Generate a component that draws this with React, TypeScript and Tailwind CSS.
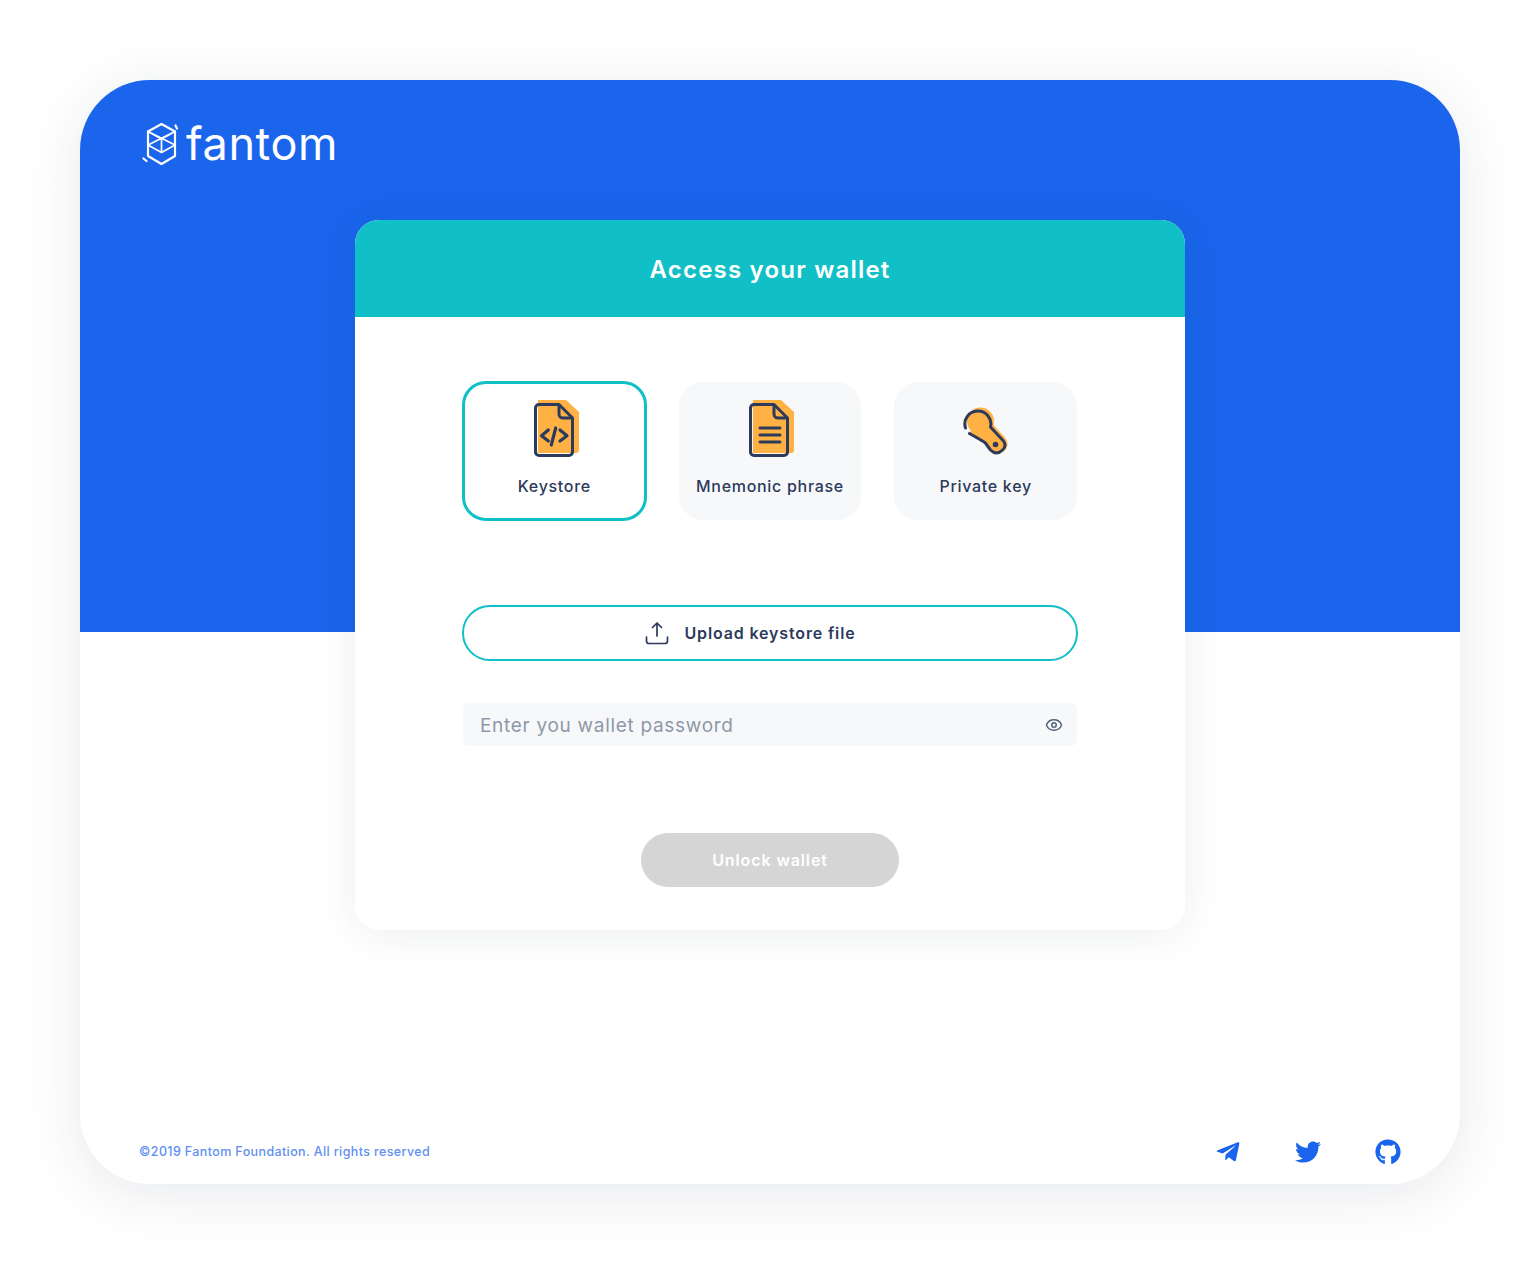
import { Eye } from 'lucide-react';
import { FaGithub, FaTelegramPlane, FaTwitter } from 'react-icons/fa';

const ink = '#2d3a5c';
const amber = '#ffb144';

function FantomLogo() {
  return (
    <svg width="40" height="44" viewBox="0 0 40 44" fill="none" stroke="#fff" strokeWidth="2.200" strokeLinejoin="round" strokeLinecap="round">
      <path d="M19.500 2 33 9.500V34L19.500 42 6 34V9.500Z" />
      <path d="M6 9.500 19.500 17 33 9.500M6 23 19.500 30.500 33 23M19.500 17V30.500M6 9.500 33 23M33 9.500 6 23" strokeWidth="1.700" />
      <path d="M33.500 3.500 35 6.500M1.500 36.500 4.500 39" />
    </svg>
  );
}

function DocShape({ children, x }: { children: React.ReactNode; x: number }) {
  return (
    <svg width="51" height="58" viewBox={`${x} 0 51 58`} fill="none">
      <path d="M4 0H32L45 12V50a3 3 0 0 1-3 3H4Z" fill={amber} />
      <path d="M25 4.500H5a3.500 3.500 0 0 0-3.500 3.500V52a3.500 3.500 0 0 0 3.500 3.500H35a3.500 3.500 0 0 0 3.500-3.500V18Z" stroke={ink} strokeWidth="3" strokeLinejoin="round" />
      <path d="M25 4.500V14a4 4 0 0 0 4 4H38.500" stroke={ink} strokeWidth="3" strokeLinejoin="round" />
      {children}
    </svg>
  );
}

function KeystoreIcon() {
  return (
    <DocShape x={-5}>
      <path d="M14.300 30 7.500 35.800 14.300 41M26 30 33 35.800 26 41M21.700 28 17.300 45" stroke={ink} strokeWidth="3.200" strokeLinecap="round" strokeLinejoin="round" />
    </DocShape>
  );
}

function MnemonicIcon() {
  return (
    <DocShape x={-5}>
      <path d="M11 28H31M11 35H31M11 42H31" stroke={ink} strokeWidth="3" strokeLinecap="round" />
    </DocShape>
  );
}

function KeyIcon() {
  return (
    <svg width="51" height="58" viewBox="960.500 400 51 58" fill="none">
      <circle cx="981" cy="421" r="13.500" fill={amber} />
      <path d="M969 432 985 442 991 450Q997 455 1003 452 1008 449 1008 444 1008 440 1005 437L993 424Z" fill={amber} />
      <path d="M966 428A13 13 0 1 1 991 427L1004 441Q1007.500 446 1003 450 997 456 991 450L985.500 442.500 977 437.500 970 433.500" stroke={ink} strokeWidth="3" strokeLinecap="round" strokeLinejoin="round" />
      <circle cx="996" cy="444.500" r="2.800" fill={ink} />
    </svg>
  );
}

function UploadIcon() {
  return (
    <svg className="-ml-[39px] mr-[15px]" width="24" height="24" viewBox="0 0 24 24" fill="none" stroke={ink} strokeWidth="1.700" strokeLinecap="round" strokeLinejoin="round">
      <path d="M12 15V2M7.500 6.500 12 2l4.500 4.500" />
      <path d="M1.500 16v4a2.500 2.500 0 0 0 2.500 2.500h16a2.500 2.500 0 0 0 2.500-2.500v-4" />
    </svg>
  );
}

const methods = [
  { label: 'Keystore', icon: <KeystoreIcon />, active: true },
  { label: 'Mnemonic phrase', icon: <MnemonicIcon />, active: false },
  { label: 'Private key', icon: <KeyIcon />, active: false },
];

export default function App() {
  return (
    <div className="min-h-screen bg-white pt-20 px-20 font-['Inter',sans-serif]">
      <div className="relative w-[1380px] h-[1104px] rounded-[70px] bg-white overflow-hidden shadow-[0_10px_60px_rgba(30,40,70,0.10)]">
        <div className="absolute inset-x-0 top-0 h-[552px] bg-[#1a65eb]" />

        <div className="relative flex flex-col h-full">
          <header className="flex items-center gap-[4px] h-[130px] pl-[62px] pb-[2px] shrink-0">
            <FantomLogo />
            <span className="text-[45px] leading-none font-normal text-white tracking-[0.6px] -mt-[1px]">fantom</span>
          </header>

          <main className="self-center w-[830px] h-[710px] mt-[10px] rounded-[24px] bg-white shadow-[0_4px_40px_rgba(30,40,70,0.08)]">
            <div className="flex items-center justify-center h-[97px] pt-[2px] rounded-t-[24px] bg-[#10c0c6]">
              <h1 className="text-[24px] font-semibold text-white tracking-[1.2px]">Access your wallet</h1>
            </div>

            <div className="flex flex-col px-[108px] pt-[65px]">
              <div className="grid grid-cols-3 gap-[33px] h-[138px]">
                {methods.map(m => (
                  <button
                    key={m.label}
                    className={
                      m.active
                        ? 'flex flex-col items-center -m-px rounded-[24px] border-[3px] border-[#10c0c6] bg-white pt-[15px]'
                        : 'flex flex-col items-center rounded-[24px] bg-[#f7f8fa] pt-[17px]'
                    }
                  >
                    <div className="flex items-center justify-center h-[60px]">{m.icon}</div>
                    <span className="mt-[17px] text-[16px] leading-5 font-medium text-[#2d3a5c] tracking-[0.7px]">{m.label}</span>
                  </button>
                ))}
              </div>

              <button className="flex items-center justify-center h-[56px] -mx-px mt-[85px] rounded-full border-2 border-[#10c0c6] bg-white">
                <UploadIcon />
                <span className="text-[16px] font-semibold text-[#2d3a5c] tracking-[0.85px]">Upload keystore file</span>
              </button>

              <div className="flex items-center justify-between h-[43px] mt-[42px] rounded-md bg-[#f7f8fa] pl-[17px] pr-[14px]">
                <span className="pt-[3px] text-[19px] text-[#8f98a8] tracking-[0.7px]">Enter you wallet password</span>
                <Eye size={18} color="#56627a" strokeWidth={2} />
              </div>

              <button className="self-center w-[258px] h-[54px] mt-[87px] rounded-full bg-[#d5d5d5] text-[16px] font-semibold text-white tracking-[0.9px]">
                Unlock wallet
              </button>
            </div>
          </main>

          <footer className="flex items-center justify-between mt-auto h-[66px] pl-[59px] pr-[59px] pt-[2px]">
            <span className="text-[12.500px] font-medium text-[#5f8ff0] tracking-[0.38px]">©2019 Fantom Foundation. All rights reserved</span>
            <div className="flex items-center gap-[54px] text-[#1a65eb]">
              <FaTelegramPlane size={26} />
              <FaTwitter size={26} />
              <FaGithub size={26} />
            </div>
          </footer>
        </div>
      </div>
    </div>
  );
}
